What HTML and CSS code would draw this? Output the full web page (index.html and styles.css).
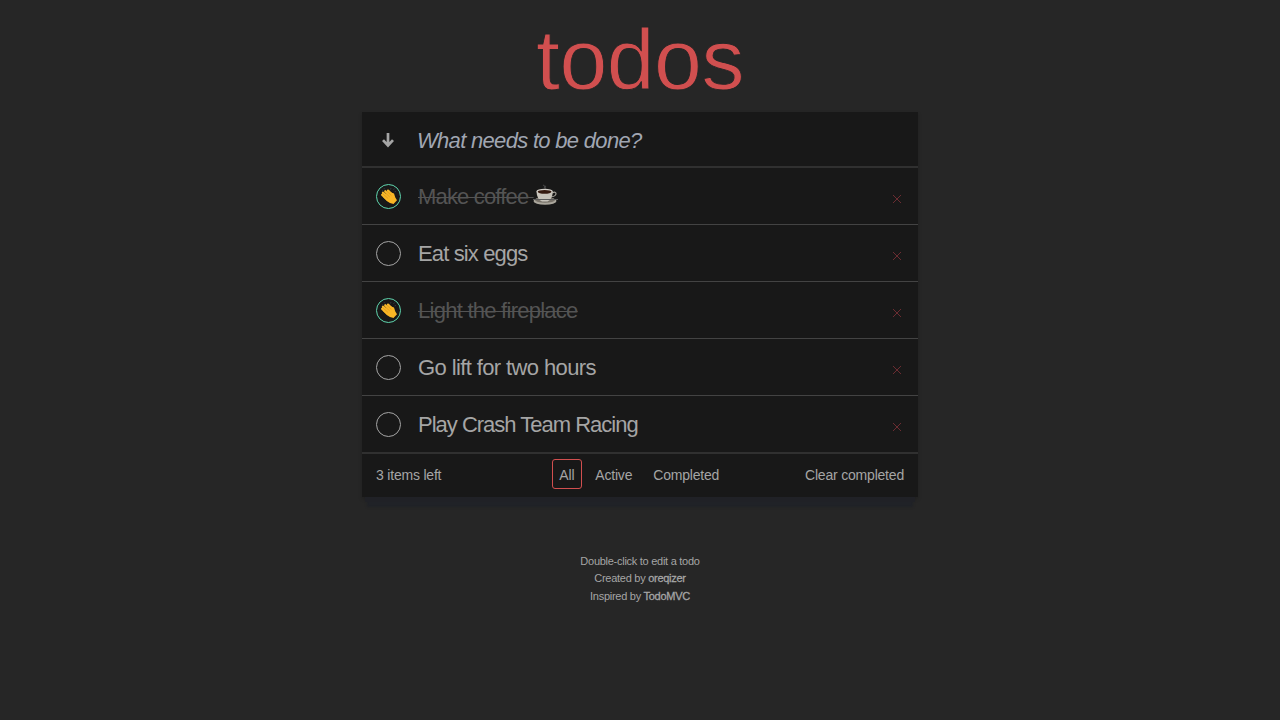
FILE: index.html
```html
<!DOCTYPE html>
<html lang="en">
<head>
<meta charset="utf-8">
<title>todos</title>
<link rel="stylesheet" href="styles.css">
</head>
<body>
<svg class="defs" aria-hidden="true">
  <symbol id="clap" viewBox="0 0 20 20">
    <path d="M3 4.500l1.300.8M5 2.200l.9 1.200M12 2l-.5 1.500M15.500 2.500l-1 1.300M17 5.500l-1.400.4" stroke="#343a3d" stroke-width="1" fill="none"/>
    <path d="M3.200 8.800l5.600 5.200M4 6.800l6 5.200M6.300 5.300l5.200 5M9 4.600l4 4" stroke="#f9b92b" stroke-width="2.300" stroke-linecap="round" fill="none"/>
    <path d="M4 11l3.800 4q3.700 3 6.700 3l3.500-3.800-1.700-2.800-1.300-4-5.500-2z" fill="#f9b625"/>
    <path d="M4 8l5.200 4.600M5.700 6.400l5 4.500M8.100 5.400l4.300 4.100" stroke="#d08a1c" stroke-width=".5" fill="none"/>
  </symbol>
</svg>
<main class="page">
  <h1 class="title">todos</h1>
  <section class="card">
    <header class="entry">
      <svg class="arrow" viewBox="0 0 12 16"><path d="M6 1v12M1 8.100L6 13.500l5-5.400" fill="none" stroke="#a5a5a5" stroke-width="2.700"/></svg>
      <span class="placeholder">What needs to be done?</span>
    </header>
    <ul class="list">
      <li class="item done"><span class="check"><svg class="clap"><use href="#clap"/></svg></span><span class="label coffee">Make coffee <svg class="cup" viewBox="0 0 25 22">
        <path d="M10 1q3 1.500 1 3M13 2q-2 1 0 2.500" stroke="#464646" stroke-width="1.200" fill="none"/>
        <ellipse cx="12" cy="17" rx="11.500" ry="3.800" fill="#aaa69c"/>
        <ellipse cx="12" cy="16" rx="10" ry="2.800" fill="#777168"/>
        <path d="M19 9q4-2 4 1-.5 2.500-5.500 3" fill="none" stroke="#aaa69e" stroke-width="1.200"/>
        <path d="M3.500 7.500q.3 8 5.500 10h5.500q5-2 5.300-10z" fill="#c7c3ba"/>
        <ellipse cx="11.600" cy="7.500" rx="8.200" ry="2.700" fill="#d1cec7"/>
        <ellipse cx="11.600" cy="7.800" rx="6.900" ry="1.900" fill="#351a10"/>
        <path d="M0 15.500h25" stroke="#5c5c5c"/>
      </svg></span><span class="remove"></span></li>
      <li class="item"><span class="check"></span><span class="label eggs">Eat six eggs</span><span class="remove"></span></li>
      <li class="item done"><span class="check"><svg class="clap"><use href="#clap"/></svg></span><span class="label fire">Light the fireplace</span><span class="remove"></span></li>
      <li class="item"><span class="check"></span><span class="label lift">Go lift for two hours</span><span class="remove"></span></li>
      <li class="item"><span class="check"></span><span class="label play">Play Crash Team Racing</span><span class="remove"></span></li>
    </ul>
    <footer class="bar">
      <span class="count">3 items left</span>
      <nav class="filters"><a class="filter active">All</a><a class="filter">Active</a><a class="filter">Completed</a></nav>
      <span class="clear">Clear completed</span>
    </footer>
  </section>
  <footer class="info">
    <p>Double-click to edit a todo</p>
    <p>Created by <b>oreqizer</b></p>
    <p>Inspired by <b>TodoMVC</b></p>
  </footer>
</main>
</body>
</html>
```
FILE: styles.css
```css
* { box-sizing: border-box; }
body { margin: 0; background: #262626; color: #a5a5a5; font-family: "Liberation Sans", Arial, sans-serif; }
.defs { position: absolute; width: 0; height: 0; }
.page { width: 556px; height: 720px; margin: 0 auto; }
.title { margin: 0; height: 112px; padding-top: 11px; font-size: 86px; line-height: 96px; font-weight: 400; text-align: center; color: #d14f4f; letter-spacing: -.5px; -webkit-text-stroke: .9px #262626; }
.card { height: 385px; background: #181818; box-shadow: 0 8px 0 -3px #202126, 0 15px 2px -5px #202227, 0 2px 4px rgba(0, 0, 0, .18); }
.entry { display: flex; align-items: center; height: 56px; border-bottom: 2px solid #303030; }
.arrow { width: 12px; height: 16px; margin: 1px 24px 0 20px; }
.placeholder { margin: 3px 0 0 -1px; font-size: 22px; line-height: 26px; font-style: italic; color: #a0a6b2; letter-spacing: -.69px; }
.list { list-style: none; margin: 0; padding: 0; }
.item { display: flex; align-items: center; height: 57px; padding: 0 17px 0 14px; border-bottom: 1px solid #434343; }
.item:last-child { height: 58px; border-bottom: 2px solid #303030; }
.check { display: flex; align-items: center; justify-content: center; width: 25px; height: 25px; border: 1px solid #a5a5a5; border-radius: 50%; margin-right: 17px; }
.done .check { border-color: #5fd5ae; }
.clap { width: 20px; height: 20px; }
.label { flex: 1; font-size: 22px; line-height: 26px; padding-top: 1px; white-space: nowrap; }
.coffee { letter-spacing: -.83px; }
.eggs { letter-spacing: -.87px; }
.fire { letter-spacing: -.74px; }
.lift { letter-spacing: -.61px; }
.play { letter-spacing: -1px; }
.done .label { color: #545454; text-decoration: line-through 1px; }
.cup { width: 25px; height: 22px; vertical-align: -2px; margin-left: -1px; }
.remove { width: 8px; height: 8px; margin: 5px 0 0; background: linear-gradient(45deg, transparent 44%, #6b2c31 47% 53%, transparent 56%), linear-gradient(-45deg, transparent 44%, #6b2c31 47% 53%, transparent 56%); }
.bar { display: grid; grid-template-columns: 1fr auto 1fr; align-items: center; height: 42px; padding: 0 14px; font-size: 14px; letter-spacing: -.2px; }
.filters { display: flex; gap: 6px; margin: 0 1.500px 2px 0; }
.filter { border: 1px solid transparent; border-radius: 3px; padding: 6px 6.500px; height: 30px; line-height: 18px; }
.filter.active { border-color: #d14f4f; }
.clear { text-align: right; }
.info { margin-top: 55.500px; font-size: 11px; text-align: center; }
.info p { margin: 0; height: 17.500px; line-height: 17.500px; letter-spacing: -.27px; }
.info b { font-weight: 400; -webkit-text-stroke: .3px #a5a5a5; }
```
